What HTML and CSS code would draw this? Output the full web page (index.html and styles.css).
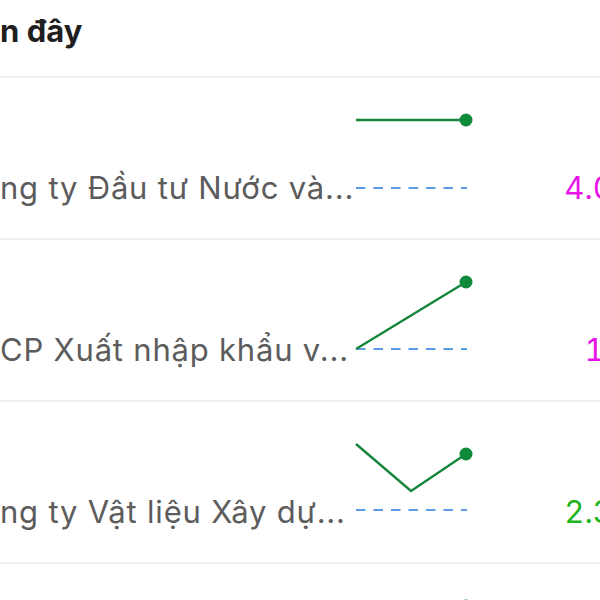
FILE: index.html
```html
<!DOCTYPE html>
<html>
	<head>
		<title>Xem gần đây</title>
		<link rel="stylesheet" href="styles.css">
	</head>
	<body>
		<div class="recent">
			<div class="recent-head">
				<h2 class="recent-title">n đây</h2>
			</div>
			<ul class="stock-list">
				<li class="stock-row">
					<span class="stock-name">ng ty Đầu tư Nước và...</span>
					<svg class="spark" width="120" height="84" viewBox="0 0 120 84">
						<line class="ref" x1="1" y1="76" x2="112" y2="76" />
						<polyline class="trend" points="1,8 111,8" />
						<circle class="last" cx="111" cy="8" r="6.5" />
					</svg>
					<span class="stock-price ceil">4.00</span>
				</li>
				<li class="stock-row">
					<span class="stock-name">CP Xuất nhập khẩu v...</span>
					<svg class="spark" width="120" height="84" viewBox="0 0 120 84">
						<line class="ref" x1="1" y1="75" x2="112" y2="75" />
						<polyline class="trend" points="1,75 111,8" />
						<circle class="last" cx="111" cy="8" r="6.5" />
					</svg>
					<span class="stock-price ceil">1.0</span>
				</li>
				<li class="stock-row">
					<span class="stock-name">ng ty Vật liệu Xây dự...</span>
					<svg class="spark" width="120" height="84" viewBox="0 0 120 84">
						<line class="ref" x1="1" y1="74" x2="112" y2="74" />
						<polyline class="trend" points="1,8 56,55 111,18" />
						<circle class="last" cx="111" cy="18" r="6.5" />
					</svg>
					<span class="stock-price up">2.30</span>
				</li>
				<li class="stock-row">
					<span class="stock-name">ng ty Cổ phần Dược...</span>
					<svg class="spark" width="120" height="84" viewBox="0 0 120 84">
						<line class="ref" x1="1" y1="76" x2="112" y2="76" />
						<polyline class="trend" points="1,40 111,8" />
						<circle class="last" cx="111" cy="8" r="6.5" />
					</svg>
					<span class="stock-price up">3.10</span>
				</li>
			</ul>
		</div>
	</body>
</html>
```

FILE: styles.css
```css
html, body {
	margin: 0;
	background: #ffffff;
	overflow: hidden;
}
body {
	font-family: Inter, "Liberation Sans", sans-serif;
	width: 600px;
	height: 600px;
}
.recent-head {
	height: 76px;
	border-bottom: 2px solid #eeeeee;
}
.recent-title {
	margin: 0;
	padding-top: 12px;
	font-size: 31px;
	line-height: 38px;
	font-weight: 700;
	color: #1f1f1f;
}
.stock-list {
	list-style-type: none;
	margin: 0;
	padding: 0;
}
.stock-row {
	display: flex;
	align-items: flex-start;
	height: 160px;
	border-bottom: 2px solid #eeeeee;
}
.stock-name {
	flex: 0 0 355px;
	margin-top: 92px;
	font-size: 31px;
	line-height: 36px;
	letter-spacing: 0.8px;
	color: #5c5c5c;
	white-space: nowrap;
	overflow: hidden;
}
.spark {
	flex: 0 0 120px;
	margin-top: 34px;
	overflow: visible;
}
.spark .ref {
	stroke: #5b9be8;
	stroke-width: 2;
	stroke-dasharray: 9.5 8;
}
.spark .trend {
	fill: none;
	stroke: #16863c;
	stroke-width: 2.4;
}
.spark .last {
	fill: #0f8a3a;
}
.stock-price {
	flex: 1 0 auto;
	margin-top: 92px;
	margin-right: -33px;
	font-size: 31px;
	line-height: 36px;
	text-align: right;
	font-variant-numeric: tabular-nums;
	white-space: nowrap;
}
.ceil {
	color: #e814e8;
}
.up {
	color: #1db41d;
}
```
